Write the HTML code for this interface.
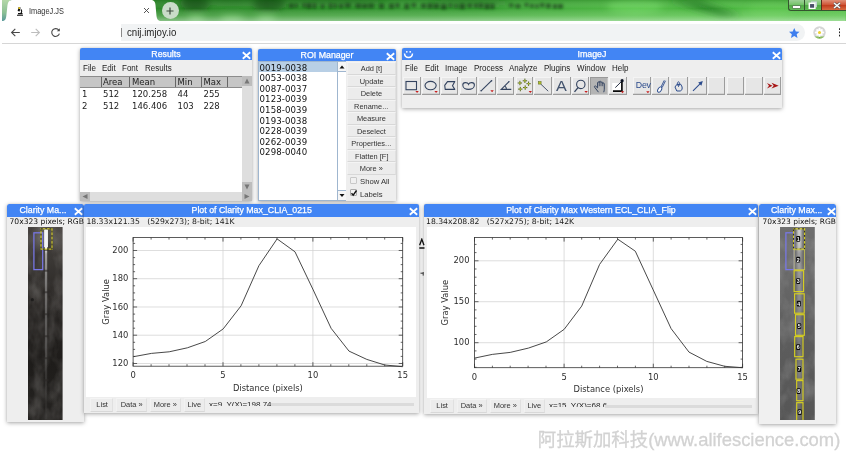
<!DOCTYPE html>
<html><head><meta charset="utf-8"><title>ImageJ.JS</title>
<style>
html,body{margin:0;padding:0}
body{width:846px;height:454px;overflow:hidden;position:relative;background:#fff;font-family:"Liberation Sans",sans-serif;color:#222}
.a{position:absolute}
.t{position:absolute;white-space:nowrap;line-height:1;transform-origin:0 50%}
.win{position:absolute;background:#eee;box-shadow:0 1px 4px rgba(0,0,0,.35),0 0 1px rgba(0,0,0,.2);border-radius:2px 2px 0 0}
.tb{position:absolute;left:0;top:0;right:0;height:12px;background:#4285f4;border-radius:2px 2px 0 0;color:#fff;font-size:8.8px;text-align:center;line-height:12.5px;-webkit-text-stroke:.25px #fff;white-space:nowrap;overflow:hidden}
.x{position:absolute;top:3px;width:9px;height:9px}
.dj{font-family:"DejaVu Sans",sans-serif}
.mono{font-family:"Liberation Mono",monospace}
.btn{position:absolute;background:#ececec;border:1px solid;border-color:#f4f4f4 #e0e0e0 #d8d8d8 #f2f2f2;box-sizing:border-box;font-size:7.9px;text-align:center;color:#333;white-space:nowrap}
.btn span{display:inline-block;transform:scaleX(.94)}
.tool{position:absolute;top:28.6px;background:#e6e6e6;box-shadow:inset -1px -1.3px 0 #9c9c9c,inset 1px 1px 0 #f4f4f4;overflow:hidden}
.tool.sel{background:#b4b4b4;box-shadow:inset 1px 1px 0 #9a9a9a,inset -1px -1px 0 #c8c8c8}
</style></head>
<body>
<div id="root" style="position:absolute;left:0;top:0;width:846px;height:454px;will-change:transform">
<!-- ===== browser chrome ===== -->
<div id="chrome" class="a" style="left:0;top:0;width:846px;height:44px;background:#fff">
 <div class="a" id="green" style="left:2px;top:0;width:844px;height:21.200px;overflow:hidden;background:linear-gradient(90deg,#2c8228 0%,#2e8a2b 18%,#33932f 35%,#3a9c36 50%,#44aa3d 62%,#4fb844 75%,#52bc46 88%,#58c04a 100%)">
  <svg class="a" style="left:0;top:0" width="844" height="21.200" viewBox="2 0 844 21.200">
   <defs><filter id="gb" x="-20%" y="-150%" width="140%" height="400%"><feGaussianBlur stdDeviation="3.500"/></filter>
   <filter id="gb2" x="-5%" y="-100%" width="110%" height="300%"><feGaussianBlur stdDeviation="1.500"/></filter>
   <linearGradient id="gv" x1="0" y1="0" x2="0" y2="1"><stop offset="0" stop-color="#0a4a0a" stop-opacity=".22"/><stop offset=".4" stop-color="#fff" stop-opacity="0"/><stop offset=".72" stop-color="#d8ffd0" stop-opacity=".2"/><stop offset="1" stop-color="#f0fff0" stop-opacity=".48"/></linearGradient></defs>
   <g filter="url(#gb)">
    <ellipse cx="195" cy="3" rx="15" ry="7" fill="#114a11" opacity=".85"/>
    <ellipse cx="269" cy="3" rx="17" ry="7" fill="#114a11" opacity=".85"/>
    <ellipse cx="232" cy="1" rx="30" ry="3" fill="#1a601a" opacity=".6"/>
    <ellipse cx="330" cy="2" rx="60" ry="4" fill="#1c641c" opacity=".45"/>
    <ellipse cx="196" cy="19" rx="9" ry="3" fill="#90d888" opacity=".7"/>
    <ellipse cx="232" cy="19" rx="12" ry="3" fill="#90d888" opacity=".7"/>
    <ellipse cx="266" cy="19" rx="10" ry="3" fill="#90d888" opacity=".7"/>
    <ellipse cx="470" cy="3" rx="40" ry="5" fill="#1f6a1f" opacity=".4"/>
    <ellipse cx="635" cy="6" rx="28" ry="8" fill="#70d862" opacity=".6"/>
    <path d="M668 0L700 0L742 16L722 18Z" fill="#1f7a20" opacity=".8"/>
    <ellipse cx="770" cy="10" rx="22" ry="9" fill="#62cc54" opacity=".5"/>
   </g>
   <g filter="url(#gb2)" fill="#0c360c" opacity=".72"><rect x="289" y="3.5" width="4.5" height="4.5"/><rect x="294.5" y="3.5" width="3" height="4"/><rect x="302.5" y="3" width="3" height="4.5"/><rect x="306.5" y="3" width="5" height="5.5"/><rect x="313.0" y="3" width="3" height="5.5"/><rect x="321.0" y="4" width="3" height="4.5"/><rect x="329.0" y="3" width="3" height="5.5"/><rect x="333.5" y="3.5" width="3" height="4.5"/><rect x="339.0" y="4" width="4" height="4"/><rect x="345.0" y="3" width="5.5" height="4.5"/><rect x="355.5" y="3.5" width="5.5" height="4.5"/><rect x="362.0" y="4" width="5.5" height="4"/><rect x="368.5" y="3.5" width="5.5" height="4.5"/><rect x="379.0" y="3.5" width="5" height="5"/><rect x="389.0" y="3.5" width="5" height="5"/><rect x="395.5" y="3" width="4" height="4.5"/><rect x="404.5" y="3.5" width="4.5" height="5.5"/><rect x="411.5" y="3" width="4.5" height="4"/><rect x="421.0" y="3.5" width="5" height="4.5"/><rect x="427.5" y="3" width="5" height="5.5"/><rect x="433.5" y="3.5" width="5.5" height="5"/><rect x="441.0" y="4" width="5.5" height="5.5"/><rect x="449.0" y="3.5" width="3" height="4"/><rect x="454.5" y="4" width="3" height="4"/><rect x="459.5" y="3.5" width="5.5" height="5.5"/><rect x="467.5" y="3.5" width="4.5" height="4"/><rect x="474.0" y="3.5" width="4" height="4"/><rect x="479.0" y="3" width="4" height="5"/><rect x="484.5" y="3.5" width="5" height="5.5"/><rect x="490.5" y="3.5" width="4" height="5.5"/><rect x="509" y="3.5" width="4.5" height="3.5"/><rect x="515.5" y="4" width="5" height="4"/><rect x="524.5" y="3" width="4" height="3.5"/><rect x="530.0" y="4" width="4" height="3.5"/><rect x="535.5" y="4" width="3" height="4"/><rect x="540.0" y="3" width="4.5" height="4"/><rect x="546.0" y="3.5" width="5" height="4.5"/><rect x="553.0" y="4" width="4" height="4.5"/><rect x="558.0" y="4" width="5" height="4.5"/></g>
   <rect x="2" y="0" width="844" height="21.200" fill="url(#gv)"/>
  </svg>
 </div>
 <!-- left sliver -->
 <div class="a" style="left:2px;top:0;width:8px;height:21px;background:linear-gradient(180deg,#b4d8a8,#8cc094 60%,#5a9a9a)"></div>
 <svg class="a" style="left:2px;top:0" width="162" height="21" viewBox="0 0 162 21"><path d="M0 21C3 21 4 19 4.300 16L5.500 5C6 1.500 7.500 0 10 0H148.500C152 0 153.100 1.500 153.500 5L154.500 16C154.900 19 156 21 159.500 21Z" fill="#fff"/></svg>
 <!-- favicon -->
 <svg class="a" style="left:16px;top:6px" width="8" height="10" viewBox="0 0 8 10"><path d="M1 9.200h6M2 7.600h4.500M4.500 7.500c1.500-.8 1.500-3 .3-4" stroke="#111" stroke-width="1.100" fill="none"/><path d="M2.600 1l2 .6l-1 4l-2-.6z" fill="#111"/><rect x="2.400" y="1.200" width="1.600" height="1.800" fill="#e8c820"/></svg>
 <div class="t" style="left:29.300px;top:7.900px;font-size:8.200px;color:#333;transform:scaleX(.9)">ImageJ.JS</div>
 <svg class="a" style="left:143.200px;top:7.200px" width="7" height="7" viewBox="0 0 7 7"><path d="M1 1L6 6M6 1L1 6" stroke="#444" stroke-width=".9" fill="none"/></svg>
 <!-- new tab -->
 <div class="a" style="left:161.800px;top:2.200px;width:17px;height:17px;border-radius:50%;background:#c9dcc8"></div>
 <svg class="a" style="left:166.300px;top:6.700px" width="8" height="8" viewBox="0 0 8 8"><path d="M4 .5V7.500M.5 4H7.500" stroke="#3c4a3c" stroke-width="1.200"/></svg>
 <!-- window controls -->
 <div class="a" style="left:787.500px;top:-1px;width:58.500px;height:11.500px;border:1px solid #35552f;border-right:0;border-radius:0 0 0 3px;box-sizing:border-box;background:linear-gradient(180deg,rgba(230,245,225,.55),rgba(150,200,140,.35) 50%,rgba(60,130,55,.35) 52%,rgba(110,180,100,.4))"></div>
 <div class="a" style="left:804px;top:0;width:1px;height:10px;background:#35552f"></div>
 <div class="a" style="left:821px;top:0;width:25px;height:10px;background:linear-gradient(180deg,#e09078,#d0583a 45%,#c03a1c 50%,#d86a40);border-left:1px solid #5a2a1a;box-sizing:border-box"></div>
 <div class="a" style="left:792.500px;top:5.500px;width:7px;height:2px;background:#fff;box-shadow:0 0 0 .5px #666"></div>
 <svg class="a" style="left:808px;top:.5px" width="9" height="8.500" viewBox="0 0 9 8.500"><path d="M3 1.200h5.200v5" fill="none" stroke="#cfd6e6" stroke-width="1.300"/><rect x="1.300" y="2.300" width="5.600" height="5.200" fill="#4a5068" stroke="#fff" stroke-width="1.500"/></svg>
 <svg class="a" style="left:832.500px;top:1.500px" width="8" height="7" viewBox="0 0 8 7"><path d="M1 1L7 6M7 1L1 6" stroke="#555" stroke-width="2.600"/><path d="M1 1L7 6M7 1L1 6" stroke="#fff" stroke-width="1.500"/></svg>
 <!-- toolbar -->
 <svg class="a" style="left:10px;top:27px" width="54" height="11" viewBox="0 0 54 11"><path d="M9.800 5.500H1.800M5.300 1.800L1.600 5.500L5.300 9.200" stroke="#484848" stroke-width="1.100" fill="none"/><path d="M21.200 5.500H29.200M25.700 1.800L29.400 5.500L25.700 9.200" stroke="#bdbdbd" stroke-width="1.100" fill="none"/><path d="M48.800 3.200A3.900 3.900 0 1 0 49.400 6.600" stroke="#484848" stroke-width="1.100" fill="none"/><path d="M49.800 1.300V4.300H46.800Z" fill="#484848"/></svg>
 <div class="a" style="left:121px;top:23.800px;width:684px;height:16.800px;background:#f1f3f4;border-radius:0 8.400px 8.400px 0"></div>
 <div class="a" style="left:121.300px;top:27.500px;width:.8px;height:9.500px;background:#8a8a8a"></div>
 <div class="t" style="left:127.400px;top:27.900px;font-size:10.300px;color:#222;transform:scaleX(.94)">cnij.imjoy.io</div>
 <svg class="a" style="left:789px;top:27.500px" width="10.500" height="10" viewBox="0 0 10.500 10"><path d="M5.250 0L6.800 3.400L10.500 3.800L7.700 6.200L8.500 9.900L5.250 8L2 9.900L2.800 6.200L0 3.800L3.700 3.400Z" fill="#3f7fee"/></svg>
 <svg class="a" style="left:813px;top:26px" width="13" height="13" viewBox="0 0 13 13"><defs><clipPath id="av"><circle cx="6.500" cy="6.500" r="6.200"/></clipPath></defs><g clip-path="url(#av)"><rect width="13" height="13" fill="#d6d6d6"/><rect y="10.500" width="13" height="3" fill="#8cc060"/><path d="M6.500 7V12" stroke="#6a9a40" stroke-width=".8"/><g fill="#fff"><ellipse cx="6.500" cy="3.800" rx="1.200" ry="2"/><ellipse cx="6.500" cy="9" rx="1.200" ry="2"/><ellipse cx="3.900" cy="6.400" rx="2" ry="1.200"/><ellipse cx="9.100" cy="6.400" rx="2" ry="1.200"/><ellipse cx="4.700" cy="4.600" rx="1.100" ry="1.800" transform="rotate(-45 4.700 4.600)"/><ellipse cx="8.300" cy="4.600" rx="1.100" ry="1.800" transform="rotate(45 8.300 4.600)"/><ellipse cx="4.700" cy="8.200" rx="1.100" ry="1.800" transform="rotate(45 4.700 8.200)"/><ellipse cx="8.300" cy="8.200" rx="1.100" ry="1.800" transform="rotate(-45 8.300 8.200)"/></g><circle cx="6.500" cy="6.400" r="1.500" fill="#f0d030"/></g></svg>
 <div class="a" style="left:838.700px;top:28.300px;width:1.800px;height:1.800px;border-radius:50%;background:#222;box-shadow:0 3.300px 0 #222,0 6.600px 0 #222"></div>
 <div class="a" style="left:2px;top:43.200px;width:844px;height:.9px;background:#d6d6d6"></div>
</div>

<!-- ===== Results ===== -->
<div class="win" id="results" style="left:80px;top:48px;width:172px;height:153px">
 <div class="tb" style="top:-.3px;height:12.400px">Results</div>
 <svg class="x" style="left:161.5px" viewBox="0 0 9 9"><path d="M.8 1.300L8.200 7.700M8.200 1.300L.8 7.700" stroke="#fff" stroke-width="1.800" fill="none"/></svg>
 <div class="t" style="left:3px;top:16.2px;font-size:8.4px;transform:scaleX(.955)">File</div>
 <div class="t" style="left:22px;top:16.2px;font-size:8.4px;transform:scaleX(.955)">Edit</div>
 <div class="t" style="left:42px;top:16.2px;font-size:8.4px;transform:scaleX(.955)">Font</div>
 <div class="t" style="left:65px;top:16.2px;font-size:8.4px;transform:scaleX(.955)">Results</div>
 <div class="a" style="left:0;top:40px;width:162px;height:104px;background:#fff"></div>
 <div class="a" style="left:0;top:28px;width:162px;height:12px;background:#c6c6c6;border-top:1px solid #8c8c8c;border-bottom:1px solid #8c8c8c;box-sizing:border-box"></div>
 <div class="a" style="left:21px;top:29px;width:1px;height:10px;background:#666"></div>
 <div class="a" style="left:49px;top:29px;width:1px;height:10px;background:#666"></div>
 <div class="a" style="left:95px;top:29px;width:1px;height:10px;background:#666"></div>
 <div class="a" style="left:121px;top:29px;width:1px;height:10px;background:#666"></div>
 <div class="a" style="left:147px;top:29px;width:1px;height:10px;background:#666"></div>
 <div class="t dj" style="left:23px;top:30px;font-size:8.5px">Area</div>
 <div class="t dj" style="left:52px;top:30px;font-size:8.5px">Mean</div>
 <div class="t dj" style="left:97.5px;top:30px;font-size:8.5px">Min</div>
 <div class="t dj" style="left:123.5px;top:30px;font-size:8.5px">Max</div>
 <div class="t dj" style="left:2px;top:42px;font-size:8.5px">1</div>
 <div class="t dj" style="left:23px;top:42px;font-size:8.5px">512</div>
 <div class="t dj" style="left:52px;top:42px;font-size:8.5px">120.258</div>
 <div class="t dj" style="left:97.5px;top:42px;font-size:8.5px">44</div>
 <div class="t dj" style="left:123.5px;top:42px;font-size:8.5px">255</div>
 <div class="t dj" style="left:2px;top:53.5px;font-size:8.5px">2</div>
 <div class="t dj" style="left:23px;top:53.5px;font-size:8.5px">512</div>
 <div class="t dj" style="left:52px;top:53.5px;font-size:8.5px">146.406</div>
 <div class="t dj" style="left:97.5px;top:53.5px;font-size:8.5px">103</div>
 <div class="t dj" style="left:123.5px;top:53.5px;font-size:8.5px">228</div>
 <!-- v scrollbar -->
 <div class="a" style="left:162px;top:28px;width:10px;height:116px;background:#dedede"></div>
 <div class="a" style="left:162px;top:28px;width:10px;height:10px;background:#bdbdbd"></div>
 <div class="a" style="left:162px;top:134px;width:10px;height:10px;background:#bdbdbd"></div>
 <svg class="a" style="left:162px;top:28px" width="10" height="10"><path d="M2.5 7.5L5 2.5L7.5 7.5Z" fill="#777"/></svg>
 <svg class="a" style="left:162px;top:134px" width="10" height="10"><path d="M2.5 2.5L5 7.5L7.5 2.5Z" fill="#777"/></svg>
 <!-- h scrollbar -->
 <div class="a" style="left:0;top:144px;width:172px;height:9px;background:#dedede"></div>
 <div class="a" style="left:0;top:144px;width:10px;height:9px;background:#bdbdbd"></div>
 <div class="a" style="left:162px;top:144px;width:10px;height:9px;background:#bdbdbd"></div>
 <svg class="a" style="left:0px;top:144px" width="10" height="9"><path d="M7.5 2L2.5 4.5L7.5 7Z" fill="#777"/></svg>
 <svg class="a" style="left:162px;top:144px" width="10" height="9"><path d="M2.5 2L7.5 4.5L2.5 7Z" fill="#777"/></svg>
</div><!--/results-->

<!-- ===== ROI Manager ===== -->
<div class="win" id="roi" style="left:258px;top:48.600px;width:138px;height:152.900px">
 <div class="tb" style="height:12.300px">ROI Manager</div>
 <svg class="x" style="left:128px" viewBox="0 0 9 9"><path d="M.8 1.300L8.200 7.700M8.200 1.300L.8 7.700" stroke="#fff" stroke-width="1.800" fill="none"/></svg>
 <div class="a" style="left:0;top:12.200px;width:88px;height:139.800px;background:#fff;border:1px solid #9fb6cf;box-sizing:border-box"></div>
 <div class="a" style="left:1px;top:13.100px;width:78px;height:10.500px;background:#b8cfe5"></div>
 <div class="t dj" style="left:1.5px;top:15.20px;font-size:8.6px;letter-spacing:.1px;color:#111">0019-0038</div>
 <div class="t dj" style="left:1.5px;top:25.75px;font-size:8.6px;letter-spacing:.1px;color:#111">0053-0038</div>
 <div class="t dj" style="left:1.5px;top:36.30px;font-size:8.6px;letter-spacing:.1px;color:#111">0087-0037</div>
 <div class="t dj" style="left:1.5px;top:46.85px;font-size:8.6px;letter-spacing:.1px;color:#111">0123-0039</div>
 <div class="t dj" style="left:1.5px;top:57.40px;font-size:8.6px;letter-spacing:.1px;color:#111">0158-0039</div>
 <div class="t dj" style="left:1.5px;top:67.95px;font-size:8.6px;letter-spacing:.1px;color:#111">0193-0038</div>
 <div class="t dj" style="left:1.5px;top:78.50px;font-size:8.6px;letter-spacing:.1px;color:#111">0228-0039</div>
 <div class="t dj" style="left:1.5px;top:89.05px;font-size:8.6px;letter-spacing:.1px;color:#111">0262-0039</div>
 <div class="t dj" style="left:1.5px;top:99.60px;font-size:8.6px;letter-spacing:.1px;color:#111">0298-0040</div>
 <div class="a" style="left:79px;top:13.200px;width:8px;height:137.800px;background:#fff;border-left:1px solid #9fb6cf"></div>
 <svg class="a" style="left:80px;top:13.200px" width="8" height="10"><rect width="8" height="9.500" fill="#f6f6f6"/><path d="M0 9.500H8" stroke="#9fb6cf" stroke-width="1"/><path d="M1.500 6.500L4 3.500L6.500 6.500Z" fill="#111"/></svg>
 <svg class="a" style="left:80px;top:141.200px" width="8" height="10"><rect y=".5" width="8" height="9.500" fill="#f6f6f6"/><path d="M0 .5H8" stroke="#9fb6cf" stroke-width="1"/><path d="M1.500 4L4 7L6.500 4Z" fill="#111"/></svg>
 <div class="btn" style="left:89px;top:13.7px;width:49px;height:12.5px;line-height:11.3px"><span>Add [t]</span></div>
 <div class="btn" style="left:89px;top:26.2px;width:49px;height:12.5px;line-height:11.3px"><span>Update</span></div>
 <div class="btn" style="left:89px;top:38.7px;width:49px;height:12.5px;line-height:11.3px"><span>Delete</span></div>
 <div class="btn" style="left:89px;top:51.2px;width:49px;height:12.5px;line-height:11.3px"><span>Rename...</span></div>
 <div class="btn" style="left:89px;top:63.7px;width:49px;height:12.5px;line-height:11.3px"><span>Measure</span></div>
 <div class="btn" style="left:89px;top:76.2px;width:49px;height:12.5px;line-height:11.3px"><span>Deselect</span></div>
 <div class="btn" style="left:89px;top:88.7px;width:49px;height:12.5px;line-height:11.3px"><span>Properties...</span></div>
 <div class="btn" style="left:89px;top:101.2px;width:49px;height:12.5px;line-height:11.3px"><span>Flatten [F]</span></div>
 <div class="btn" style="left:89px;top:113.7px;width:49px;height:12.5px;line-height:11.3px"><span>More »</span></div>
 <div class="a" style="left:91.500px;top:128.4px;width:7px;height:7px;border:1px solid #c8c8c8;background:#f0f0f0;border-radius:1px;box-sizing:border-box"></div>
 <div class="t" style="left:102.300px;top:129.2px;font-size:8.100px;color:#333;transform:scaleX(.95)">Show All</div>
 <div class="a" style="left:91.500px;top:140.9px;width:7px;height:7px;border:1px solid #aaa;background:#f4f4f4;border-radius:1px;box-sizing:border-box"></div>
 <svg class="a" style="left:91.500px;top:140.2px" width="8" height="8"><path d="M1.500 4.200L3.200 6.200L6.500 1.500" stroke="#111" stroke-width="1.400" fill="none"/></svg>
 <div class="t" style="left:102.300px;top:142.3px;font-size:8.100px;color:#333;transform:scaleX(.95)">Labels</div>
</div><!--/roi-->

<!-- ===== ImageJ ===== -->
<div class="win" id="ij" style="left:402px;top:48px;width:380px;height:59.5px">
 <div class="tb" style="top:-.3px;height:12.400px">ImageJ</div>
 <svg class="x" style="left:369.5px" viewBox="0 0 9 9"><path d="M.8 1.300L8.200 7.700M8.200 1.300L.8 7.700" stroke="#fff" stroke-width="1.800" fill="none"/></svg>
 <svg class="a" style="left:.800px;top:.600px" width="11" height="10" viewBox="0 0 11 10"><path d="M1.500 4.500c.3 3 2 4 4 4s3.700-1 4-4" fill="none" stroke="#fff" stroke-width="1.500"/><circle cx="3.800" cy="2.800" r=".9" fill="#fff"/><circle cx="7.200" cy="2.800" r=".9" fill="#fff"/></svg>
 <div class="t" style="left:3.2px;top:16.300px;font-size:8.4px;transform:scaleX(.955)">File</div>
 <div class="t" style="left:22.7px;top:16.300px;font-size:8.4px;transform:scaleX(.955)">Edit</div>
 <div class="t" style="left:42.8px;top:16.300px;font-size:8.4px;transform:scaleX(.955)">Image</div>
 <div class="t" style="left:71.6px;top:16.300px;font-size:8.4px;transform:scaleX(.955)">Process</div>
 <div class="t" style="left:107.0px;top:16.300px;font-size:8.4px;transform:scaleX(.955)">Analyze</div>
 <div class="t" style="left:142.0px;top:16.300px;font-size:8.4px;transform:scaleX(.955)">Plugins</div>
 <div class="t" style="left:175.0px;top:16.300px;font-size:8.4px;transform:scaleX(.955)">Window</div>
 <div class="t" style="left:209.8px;top:16.300px;font-size:8.4px;transform:scaleX(.955)">Help</div>
 <svg class="tool" style="left:1.4px" width="17.6" height="18" viewBox="0 0 17.6 18"><rect x="3" y="4.500" width="10.500" height="8.200" fill="none" stroke="#33435f" stroke-width="1.100"/><path d="M12.4 14h3.400l-1.700 2z" fill="#c81e1e"/></svg>
 <svg class="tool" style="left:20.1px" width="17.6" height="18" viewBox="0 0 17.6 18"><ellipse cx="8.600" cy="8.600" rx="5.600" ry="4.200" fill="none" stroke="#33435f" stroke-width="1.100"/><path d="M12.4 14h3.400l-1.700 2z" fill="#c81e1e"/></svg>
 <svg class="tool" style="left:38.8px" width="17.6" height="18" viewBox="0 0 17.6 18"><path d="M6.500 4.600H13.800L11.500 8.800L13.800 12.400H4.200L3.700 8.300Z" fill="none" stroke="#33435f" stroke-width="1.100" stroke-linejoin="round"/></svg>
 <svg class="tool" style="left:57.5px" width="17.6" height="18" viewBox="0 0 17.6 18"><path d="M8.550 7.300C7.600 5.200 2.800 4.800 2.800 8C2.800 10.800 5.600 12.400 8.550 12.400C11.500 12.400 14.400 10.800 14.400 8C14.400 4.800 9.500 5.200 8.550 7.300Z" fill="none" stroke="#33435f" stroke-width="1.100"/></svg>
 <svg class="tool" style="left:76.2px" width="17.6" height="18" viewBox="0 0 17.6 18"><path d="M3.100 13.800L13.600 3.700" stroke="#33435f" stroke-width="1.100"/><circle cx="3.100" cy="13.800" r=".8" fill="#33435f"/><circle cx="13.600" cy="3.700" r=".8" fill="#33435f"/><path d="M12.400 13.200h3.400l-1.700 2z" fill="#c81e1e"/></svg>
 <svg class="tool" style="left:94.9px" width="17.6" height="18" viewBox="0 0 17.6 18"><path d="M12 4.600L4.200 12.400H14.300M9.500 12.400C9.500 10.800 8.900 9.800 7.900 9.100" fill="none" stroke="#33435f" stroke-width="1.100"/><circle cx="12" cy="4.600" r=".7" fill="#33435f"/></svg>
 <svg class="tool" style="left:113.6px" width="17.6" height="18" viewBox="0 0 17.6 18"><path d="M3.9 3.8v4.400M1.6999999999999997 6h4.400" stroke="#55651c" stroke-width="1"/><rect x="3.2" y="5.3" width="1.400" height="1.400" fill="#b4c424"/><path d="M8.9 1.5999999999999996v4.400M6.7 3.8h4.400" stroke="#55651c" stroke-width="1"/><rect x="8.200000000000001" y="3.0999999999999996" width="1.400" height="1.400" fill="#b4c424"/><path d="M12.6 4.5v4.400M10.399999999999999 6.7h4.400" stroke="#55651c" stroke-width="1"/><rect x="11.9" y="6.0" width="1.400" height="1.400" fill="#b4c424"/><path d="M4.3 9.899999999999999v4.400M2.0999999999999996 12.1h4.400" stroke="#55651c" stroke-width="1"/><rect x="3.5999999999999996" y="11.4" width="1.400" height="1.400" fill="#b4c424"/><path d="M9.2 8.399999999999999v4.400M6.999999999999999 10.6h4.400" stroke="#55651c" stroke-width="1"/><rect x="8.5" y="9.9" width="1.400" height="1.400" fill="#b4c424"/><path d="M12.600 14h3.400l-1.700 2z" fill="#c81e1e"/></svg>
 <svg class="tool" style="left:132.3px" width="17.6" height="18" viewBox="0 0 17.6 18"><path d="M6.500 6.800L14.200 14.200" stroke="#4a566c" stroke-width="1"/><rect x="4.300" y="4.600" width="2.800" height="2.500" fill="#b4c424" stroke="#6a7530" stroke-width=".6"/></svg>
 <svg class="tool" style="left:151.0px" width="17.6" height="18" viewBox="0 0 17.6 18"><text x="0" y="0" transform="translate(8.500 14.200) scale(1.12 1)" font-family="Liberation Sans,sans-serif" font-size="14.500" text-anchor="middle" fill="#44546e">A</text></svg>
 <svg class="tool" style="left:169.7px" width="17.6" height="18" viewBox="0 0 17.6 18"><circle cx="8.800" cy="7.400" r="4.200" fill="none" stroke="#33435f" stroke-width="1.100"/><path d="M6 10.600L2.500 14.900" stroke="#33435f" stroke-width="1.300"/><path d="M12.4 14h3.400l-1.700 2z" fill="#c81e1e"/></svg>
 <svg class="tool sel" style="left:188.4px" width="17.6" height="18" viewBox="0 0 17.6 18"><path d="M8.500 15.200L4.600 10.200c-.6-.9.400-1.700 1.200-1l1.800 1.700v-5.200c0-1.100 1.700-1.100 1.700 0v-.7c0-1.100 1.700-1.100 1.700 0v.7c0-1 1.700-1 1.700 0v1c0-.9 1.600-.9 1.600 0v5.500c0 1.300-.3 2.300-.6 3" fill="none" stroke="#33435f" stroke-width="1"/><path d="M9.300 5.500v3.700M11 5.500v3.700M12.700 6.500v2.700" stroke="#33435f" stroke-width=".8"/></svg>
 <svg class="tool" style="left:207.1px" width="17.6" height="18" viewBox="0 0 17.6 18"><rect x="3.200" y="6" width="9.500" height="7.500" fill="#fff"/><path d="M4 14.200h9.800M12.900 4.600v10.400" fill="none" stroke="#0a0a0a" stroke-width="1.700"/><path d="M6.300 10.600L12 5" stroke="#222c40" stroke-width="1"/><circle cx="13.100" cy="3.700" r="1.600" fill="#0a1020"/><path d="M11.800 14.300h3.400l-1.700 2z" fill="#c81e1e"/></svg>
 <svg class="tool" style="left:231.0px" width="17.6" height="18" viewBox="0 0 17.6 18"><text x="2.800" y="10.900" font-family="Liberation Sans,sans-serif" font-size="8.800" letter-spacing="-.2" fill="#2a4a8c">Dev</text><path d="M13.200 14.300h3.400l-1.700 2z" fill="#c81e1e"/></svg>
 <svg class="tool" style="left:249.7px" width="17.6" height="18" viewBox="0 0 17.6 18"><path d="M12.300 3.300L9 10M13.500 3.800L10.200 10.500" stroke="#2a4a8c" stroke-width=".9"/><ellipse cx="7.700" cy="12.600" rx="1.700" ry="2.900" transform="rotate(32 7.700 12.600)" fill="#fff" stroke="#2a4a8c" stroke-width=".9"/></svg>
 <svg class="tool" style="left:268.4px" width="17.6" height="18" viewBox="0 0 17.6 18"><path d="M5 10l2-2.700h3.800l1.300 2.700v2.500l-1.800 1.500h-3.500z" fill="none" stroke="#2a4a8c" stroke-width="1"/><path d="M7.500 8.500c-.5-1.800 0-3 1-3.900c1 .9 1.500 2.100 1 3.900" fill="none" stroke="#2a4a8c" stroke-width=".9"/><path d="M8.500 7v3" stroke="#2a4a8c" stroke-width=".8"/></svg>
 <svg class="tool" style="left:287.1px" width="17.6" height="18" viewBox="0 0 17.6 18"><path d="M4 13.800L11.500 6.300" stroke="#2a4a8c" stroke-width="1.100"/><path d="M13.800 4l-4.600 1.500l3.200 3.200z" fill="#2a4a8c"/></svg>
 <svg class="tool" style="left:305.8px" width="17.6" height="18" viewBox="0 0 17.6 18"></svg>
 <svg class="tool" style="left:324.5px" width="17.6" height="18" viewBox="0 0 17.6 18"></svg>
 <svg class="tool" style="left:343.2px" width="17.6" height="18" viewBox="0 0 17.6 18"></svg>
 <svg class="tool" style="left:361.9px" width="17.6" height="18" viewBox="0 0 17.6 18"><path d="M3 6l5.500 2.700l-5.500 2.700l2-2.700z" fill="#a81616"/><path d="M7.500 5.800l7.200 2.900l-7.200 2.900l2.200-2.900z" fill="#a81616"/></svg>
</div><!--/ij-->

<!-- ===== left image ===== -->
<div class="win" id="imgL" style="left:7px;top:204px;width:77.400px;height:218.3px;overflow:hidden">
 <div class="tb" style="height:12.800px;text-align:left;padding-left:12.5px;right:0">Clarity Ma...</div>
 <svg class="x" style="left:67.0px" viewBox="0 0 9 9"><path d="M.8 1.300L8.200 7.700M8.200 1.300L.8 7.700" stroke="#fff" stroke-width="1.800" fill="none"/></svg>
 <div class="t dj" style="left:2.5px;top:13.600px;font-size:7.6px;color:#111">70x323 pixels; RGB; 88K</div>
 <svg class="a" style="left:21.4px;top:22.8px" width="34.6" height="193.6" viewBox="28.4 226.8 34.6 193.6">
  <defs>
   <linearGradient id="lbg" x1="0" y1="0" x2="0" y2="1"><stop offset="0" stop-color="#45413e"/><stop offset=".18" stop-color="#3a3734"/><stop offset=".4" stop-color="#282523"/><stop offset=".7" stop-color="#1e1c1a"/><stop offset="1" stop-color="#252321"/></linearGradient>
   <linearGradient id="lst" x1="0" y1="0" x2="0" y2="1"><stop offset="0" stop-color="#fff" stop-opacity="1"/><stop offset=".1" stop-color="#fff" stop-opacity=".95"/><stop offset=".13" stop-color="#ddd" stop-opacity=".62"/><stop offset=".3" stop-color="#ccc" stop-opacity=".42"/><stop offset=".55" stop-color="#bbb" stop-opacity=".3"/><stop offset=".8" stop-color="#aaa" stop-opacity=".14"/><stop offset="1" stop-color="#aaa" stop-opacity=".05"/></linearGradient>
   <radialGradient id="lb1"><stop offset="0" stop-color="#8a8885" stop-opacity=".55"/><stop offset="1" stop-color="#8a8885" stop-opacity="0"/></radialGradient>
   <filter id="nz1" x="0" y="0" width="100%" height="100%"><feTurbulence type="fractalNoise" baseFrequency=".09 .05" numOctaves="3" seed="4"/><feColorMatrix values="0 0 0 0 .62  0 0 0 0 .6  0 0 0 0 .58  .9 .9 0 0 -.72"/></filter>
   <filter id="bl1" x="-50%" y="-5%" width="200%" height="110%"><feGaussianBlur stdDeviation=".7"/></filter>
  </defs>
  <rect x="28.4" y="226.8" width="34.6" height="193.6" fill="url(#lbg)"/>
  <rect x="28.4" y="226.8" width="34.6" height="193.6" filter="url(#nz1)" opacity=".3"/>
  <ellipse cx="40" cy="238" rx="10" ry="16" fill="url(#lb1)"/>
  <ellipse cx="56" cy="240" rx="8" ry="14" fill="url(#lb1)" opacity=".7"/>
  <ellipse cx="36" cy="290" rx="8" ry="14" fill="url(#lb1)" opacity=".35"/>
  <ellipse cx="57" cy="300" rx="8" ry="18" fill="url(#lb1)" opacity=".3"/>
  <ellipse cx="52" cy="397" rx="7" ry="7" fill="url(#lb1)" opacity=".4"/>
  <ellipse cx="32" cy="410" rx="7" ry="8" fill="url(#lb1)" opacity=".4"/>
  <ellipse cx="32.800" cy="299.500" rx="1.600" ry="1.600" fill="#111" opacity=".6"/>
  <g filter="url(#bl1)">
   <rect x="45.300" y="229" width="2.300" height="190" fill="url(#lst)"/>
   <rect x="44.500" y="229.500" width="3.900" height="17.500" fill="#f4f4f4" opacity=".95"/>
  </g>
  <path d="M44 249.800h5M44 270.500h5M44 292h5M44 314h5M44 336h5M44 358h5M44 380h5" stroke="#2b2826" stroke-width="2" opacity=".6"/>
  <rect x="34.300" y="232.600" width="8.800" height="36.800" fill="none" stroke="#7878e8" stroke-width="1.250"/>
  <rect x="41.400" y="228.600" width="11" height="20.300" fill="none" stroke="#e0d820" stroke-width="1"/>
  <rect x="41.400" y="228.600" width="11" height="20.300" fill="none" stroke="#222" stroke-width="1" stroke-dasharray="1.800 2.500"/>
 </svg>
</div><!--/imgL-->

<!-- ===== plot 1 ===== -->
<div class="win" id="plot1" style="left:84.4px;top:204px;width:334.6px;height:208.5px">
 <div class="tb" style="height:12.800px">Plot of Clarity Max_CLIA_0215</div>
 <svg class="x" style="left:324.6px" viewBox="0 0 9 9"><path d="M.8 1.300L8.200 7.700M8.200 1.300L.8 7.700" stroke="#fff" stroke-width="1.800" fill="none"/></svg>
 <div class="t dj" style="left:2px;top:13.600px;font-size:7.7px;color:#1a1a1a">18.33x121.35&nbsp;&nbsp; (529x273); 8-bit; 141K</div>
 <svg class="a" style="left:2.1px;top:22.7px" width="330.0" height="170.3" viewBox="86.5 226.7 330.0 170.3" font-family="DejaVu Sans,sans-serif" font-size="8.400" fill="#2e2e2e">
  <rect x="86.5" y="226.7" width="330.0" height="170.3" fill="#fff"/>
  <path d="M223.5 237.3V365.9M313.4 237.3V365.9M133.6 250.2H403.2M133.6 278.4H403.2M133.6 306.7H403.2M133.6 334.9H403.2M133.6 363.2H403.2" stroke="#cecece" stroke-width=".7" fill="none"/>
  <path d="M133.6 365.9v-4M133.6 237.3v4M223.5 365.9v-4M223.5 237.3v4M313.4 365.9v-4M313.4 237.3v4M403.2 365.9v-4M403.2 237.3v4M151.6 365.9v-2M151.6 237.3v2M169.5 365.9v-2M169.5 237.3v2M187.5 365.9v-2M187.5 237.3v2M205.5 365.9v-2M205.5 237.3v2M241.4 365.9v-2M241.4 237.3v2M259.4 365.9v-2M259.4 237.3v2M277.4 365.9v-2M277.4 237.3v2M295.4 365.9v-2M295.4 237.3v2M331.3 365.9v-2M331.3 237.3v2M349.3 365.9v-2M349.3 237.3v2M367.3 365.9v-2M367.3 237.3v2M385.2 365.9v-2M385.2 237.3v2M133.6 250.2h4M403.2 250.2h-4M133.6 278.4h4M403.2 278.4h-4M133.6 306.7h4M403.2 306.7h-4M133.6 334.9h4M403.2 334.9h-4M133.6 363.2h4M403.2 363.2h-4M133.6 356.1h2M403.2 356.1h-2M133.6 349.1h2M403.2 349.1h-2M133.6 342.0h2M403.2 342.0h-2M133.6 327.9h2M403.2 327.9h-2M133.6 320.8h2M403.2 320.8h-2M133.6 313.8h2M403.2 313.8h-2M133.6 299.6h2M403.2 299.6h-2M133.6 292.6h2M403.2 292.6h-2M133.6 285.5h2M403.2 285.5h-2M133.6 271.4h2M403.2 271.4h-2M133.6 264.3h2M403.2 264.3h-2M133.6 257.3h2M403.2 257.3h-2M133.6 243.1h2M403.2 243.1h-2" stroke="#333" stroke-width=".75" fill="none"/>
  <rect x="133.6" y="237.3" width="269.6" height="128.6" fill="none" stroke="#333" stroke-width=".8"/>
  <polyline points="134.0,356.4 151.9,353.1 169.7,351.5 187.9,347.5 205.8,341.2 223.7,328.6 241.6,305.5 259.4,265.4 277.6,238.6 295.5,251.5 313.7,289.6 331.6,328.0 349.5,350.8 367.3,359.1 385.2,364.7 403.1,366.4" fill="none" stroke="#333" stroke-width=".9" stroke-linejoin="round"/>
  <text x="133.6" y="378.2" text-anchor="middle">0</text>
  <text x="223.5" y="378.2" text-anchor="middle">5</text>
  <text x="313.4" y="378.2" text-anchor="middle">10</text>
  <text x="403.2" y="378.2" text-anchor="middle">15</text>
  <text x="128.8" y="252.8" text-anchor="end">200</text>
  <text x="128.8" y="281.1" text-anchor="end">180</text>
  <text x="128.8" y="309.3" text-anchor="end">160</text>
  <text x="128.8" y="337.6" text-anchor="end">140</text>
  <text x="128.8" y="365.8" text-anchor="end">120</text>
  <text x="268.4" y="390.3" text-anchor="middle">Distance (pixels)</text>
  <text transform="translate(109 301.6) rotate(-90)" text-anchor="middle">Gray Value</text>
 </svg>
 <div class="btn" style="left:5.6px;top:194.0px;width:23.5px;height:13.5px;line-height:11.5px"><span>List</span></div>
 <div class="btn" style="left:32.1px;top:194.0px;width:31.0px;height:13.5px;line-height:11.5px"><span>Data »</span></div>
 <div class="btn" style="left:65.2px;top:194.0px;width:31.0px;height:13.5px;line-height:11.5px"><span>More »</span></div>
 <div class="btn" style="left:99.6px;top:194.0px;width:21.0px;height:13.5px;line-height:11.5px"><span>Live</span></div>
 <div class="a" style="left:124.6px;top:197.3px;width:120px;height:5.2px;overflow:hidden"><div class="t" style="left:0;top:-0.8px;font-size:8px;color:#222">x=9. Y(X)=198.74</div></div>
 <div class="a" style="left:186.6px;top:199.2px;width:143.0px;height:3px;background:#dbdbdb"></div>
</div><!--/plot1-->

<!-- ===== plot 2 ===== -->
<div class="win" id="plot2" style="left:424px;top:204px;width:334px;height:209.5px">
 <div class="tb" style="height:12.800px">Plot of Clarity Max Western ECL_CLIA_Flip</div>
 <svg class="x" style="left:323.7px" viewBox="0 0 9 9"><path d="M.8 1.300L8.200 7.700M8.200 1.300L.8 7.700" stroke="#fff" stroke-width="1.800" fill="none"/></svg>
 <div class="t dj" style="left:2px;top:13.600px;font-size:7.7px;color:#1a1a1a">18.34x208.82&nbsp;&nbsp; (527x275); 8-bit; 142K</div>
 <svg class="a" style="left:2.5px;top:22.7px" width="329.5" height="171.3" viewBox="426.5 226.7 329.5 171.3" font-family="DejaVu Sans,sans-serif" font-size="8.400" fill="#2e2e2e">
  <rect x="426.5" y="226.7" width="329.5" height="171.3" fill="#fff"/>
  <path d="M563.6 237.3V367.4M652.8 237.3V367.4M474 260.5H742.1M474 301.4H742.1M474 342.4H742.1" stroke="#cecece" stroke-width=".7" fill="none"/>
  <path d="M474.0 367.4v-4M474.0 237.3v4M563.6 367.4v-4M563.6 237.3v4M652.8 367.4v-4M652.8 237.3v4M742.1 367.4v-4M742.1 237.3v4M491.9 367.4v-2M491.9 237.3v2M509.7 367.4v-2M509.7 237.3v2M527.6 367.4v-2M527.6 237.3v2M545.5 367.4v-2M545.5 237.3v2M581.2 367.4v-2M581.2 237.3v2M599.1 367.4v-2M599.1 237.3v2M617.0 367.4v-2M617.0 237.3v2M634.9 367.4v-2M634.9 237.3v2M670.6 367.4v-2M670.6 237.3v2M688.5 367.4v-2M688.5 237.3v2M706.4 367.4v-2M706.4 237.3v2M724.2 367.4v-2M724.2 237.3v2M474 260.5h4M742.1 260.5h-4M474 301.4h4M742.1 301.4h-4M474 342.4h4M742.1 342.4h-4M474 367.0h2M742.1 367.0h-2M474 358.8h2M742.1 358.8h-2M474 350.6h2M742.1 350.6h-2M474 334.2h2M742.1 334.2h-2M474 326.0h2M742.1 326.0h-2M474 317.8h2M742.1 317.8h-2M474 309.6h2M742.1 309.6h-2M474 293.3h2M742.1 293.3h-2M474 285.1h2M742.1 285.1h-2M474 276.9h2M742.1 276.9h-2M474 268.7h2M742.1 268.7h-2M474 252.3h2M742.1 252.3h-2M474 244.1h2M742.1 244.1h-2" stroke="#333" stroke-width=".75" fill="none"/>
  <rect x="474" y="237.3" width="268.1" height="130.1" fill="none" stroke="#333" stroke-width=".8"/>
  <polyline points="474.0,357.8 491.8,354.1 509.7,352.1 527.9,347.8 545.8,341.6 563.7,329.0 581.2,305.8 599.1,264.1 617.3,238.9 634.8,250.9 652.7,289.6 670.6,328.3 688.5,351.8 706.3,361.1 724.2,366.0 742.1,367.4" fill="none" stroke="#333" stroke-width=".9" stroke-linejoin="round"/>
  <text x="474.0" y="379.6" text-anchor="middle">0</text>
  <text x="563.6" y="379.6" text-anchor="middle">5</text>
  <text x="652.8" y="379.6" text-anchor="middle">10</text>
  <text x="742.1" y="379.6" text-anchor="middle">15</text>
  <text x="469" y="263.1" text-anchor="end">200</text>
  <text x="469" y="304.0" text-anchor="end">150</text>
  <text x="469" y="345.0" text-anchor="end">100</text>
  <text x="608.0" y="392" text-anchor="middle">Distance (pixels)</text>
  <text transform="translate(447.8 302.4) rotate(-90)" text-anchor="middle">Gray Value</text>
 </svg>
 <div class="btn" style="left:6.0px;top:195.0px;width:23.8px;height:13.5px;line-height:11.5px"><span>List</span></div>
 <div class="btn" style="left:33.0px;top:195.0px;width:29.6px;height:13.5px;line-height:11.5px"><span>Data »</span></div>
 <div class="btn" style="left:65.5px;top:195.0px;width:31.5px;height:13.5px;line-height:11.5px"><span>More »</span></div>
 <div class="btn" style="left:100.4px;top:195.0px;width:20.4px;height:13.5px;line-height:11.5px"><span>Live</span></div>
 <div class="a" style="left:125.0px;top:198.3px;width:120px;height:5.2px;overflow:hidden"><div class="t" style="left:0;top:-0.8px;font-size:8px;color:#222">x=15. Y(X)=68.6</div></div>
 <div class="a" style="left:181.0px;top:200.6px;width:147.0px;height:3px;background:#dbdbdb"></div>
</div><!--/plot2-->

<!-- ===== right image ===== -->
<div class="win" id="imgR" style="background:#f0f0f0;left:758.7px;top:204px;width:77.800px;height:219.500px;overflow:hidden">
 <div class="tb" style="height:12.800px;text-align:left;padding-left:12.300px;right:0">Clarity Max...</div>
 <svg class="x" style="left:68.3px" viewBox="0 0 9 9"><path d="M.8 1.300L8.200 7.700M8.200 1.300L.8 7.700" stroke="#fff" stroke-width="1.800" fill="none"/></svg>
 <div class="t dj" style="left:3.800px;top:13.600px;font-size:7.5px;color:#111">70x323 pixels; RGB; 88K</div>
 <svg class="a" style="left:21.7px;top:22.8px" width="34.8" height="193.7" viewBox="780.4 226.8 34.8 193.7" font-family="Liberation Sans,sans-serif" font-size="5.200" font-weight="bold">
  <defs>
   <linearGradient id="rbg" x1="0" y1="0" x2="0" y2="1"><stop offset="0" stop-color="#6e6e6e"/><stop offset=".3" stop-color="#666"/><stop offset=".6" stop-color="#5c5c5c"/><stop offset="1" stop-color="#565656"/></linearGradient>
   <linearGradient id="rst" x1="0" y1="0" x2="0" y2="1"><stop offset="0" stop-color="#fff" stop-opacity=".72"/><stop offset=".1" stop-color="#fff" stop-opacity=".6"/><stop offset=".13" stop-color="#eee" stop-opacity=".4"/><stop offset=".4" stop-color="#ddd" stop-opacity=".3"/><stop offset="1" stop-color="#ccc" stop-opacity=".15"/></linearGradient>
   <filter id="nz2" x="0" y="0" width="100%" height="100%"><feTurbulence type="fractalNoise" baseFrequency=".08 .05" numOctaves="3" seed="9"/><feColorMatrix values="0 0 0 0 .75  0 0 0 0 .75  0 0 0 0 .75  .9 .9 0 0 -.72"/></filter>
   <filter id="bl2" x="-50%" y="-5%" width="200%" height="110%"><feGaussianBlur stdDeviation=".8"/></filter>
  </defs>
  <rect x="780.4" y="226.8" width="34.8" height="193.7" fill="url(#rbg)"/>
  <rect x="780.4" y="226.8" width="34.8" height="193.7" filter="url(#nz2)" opacity=".28"/>
  <rect x="797.500" y="228" width="4.400" height="192" fill="url(#rst)" filter="url(#bl2)"/>
  <rect x="786.300" y="232.600" width="8.200" height="36.800" fill="none" stroke="#7878e8" stroke-width="1.250"/>
  <rect x="794" y="228.6" width="11.0" height="20.3" fill="none" stroke="#d8d020" stroke-width="1.15"/>
  <rect x="794" y="228.6" width="11.0" height="20.3" fill="none" stroke="#222" stroke-width="1" stroke-dasharray="1.800 2.500"/>
  <rect x="796.6" y="235.8" width="4" height="5.800" rx="1" fill="#0a0a0a"/><text x="798.6" y="240.6" text-anchor="middle" fill="#fff">1</text>
  <rect x="794.5" y="249.5" width="10.5" height="19.9" fill="none" stroke="#c4c050" stroke-width="0.9"/>
  <rect x="796.6" y="256.6" width="4" height="5.800" rx="1" fill="#0a0a0a"/><text x="798.6" y="261.4" text-anchor="middle" fill="#fff">2</text>
  <rect x="794.5" y="270.5" width="9.5" height="20.9" fill="none" stroke="#d8d020" stroke-width="1.15"/>
  <rect x="796.6" y="278.1" width="4" height="5.800" rx="1" fill="#0a0a0a"/><text x="798.6" y="282.9" text-anchor="middle" fill="#fff">3</text>
  <rect x="795" y="293.6" width="9.6" height="19.4" fill="none" stroke="#d8d020" stroke-width="1.15"/>
  <rect x="797.2" y="300.6" width="4" height="5.800" rx="1" fill="#0a0a0a"/><text x="799.2" y="305.4" text-anchor="middle" fill="#fff">4</text>
  <rect x="795.9" y="314.5" width="8.8" height="20.6" fill="none" stroke="#d8d020" stroke-width="1.15"/>
  <rect x="797.6" y="323.1" width="4" height="5.800" rx="1" fill="#0a0a0a"/><text x="799.6" y="327.9" text-anchor="middle" fill="#fff">5</text>
  <rect x="795.1" y="336.4" width="8.3" height="20.1" fill="none" stroke="#d8d020" stroke-width="1.15"/>
  <rect x="796.6" y="344.1" width="4" height="5.800" rx="1" fill="#0a0a0a"/><text x="798.6" y="348.9" text-anchor="middle" fill="#fff">6</text>
  <rect x="796.4" y="359" width="7.0" height="20.0" fill="none" stroke="#d8d020" stroke-width="1.15"/>
  <rect x="797.6" y="366.1" width="4" height="5.800" rx="1" fill="#0a0a0a"/><text x="799.6" y="370.9" text-anchor="middle" fill="#fff">7</text>
  <rect x="797.1" y="380.4" width="6.3" height="20.1" fill="none" stroke="#d8d020" stroke-width="1.15"/>
  <rect x="797.0" y="388.1" width="4" height="5.800" rx="1" fill="#0a0a0a"/><text x="799.0" y="392.9" text-anchor="middle" fill="#fff">8</text>
  <rect x="797.1" y="402.5" width="6.3" height="18.5" fill="none" stroke="#d8d020" stroke-width="1.15"/>
  <rect x="798.0" y="409.1" width="4" height="5.800" rx="1" fill="#0a0a0a"/><text x="800.0" y="413.9" text-anchor="middle" fill="#fff">9</text>
 </svg>
</div><!--/imgR-->

<!-- artefacts of a window behind -->
<svg class="a" style="left:419px;top:238px" width="6" height="40" viewBox="0 0 6 40"><path d="M.6 7.200L2.800 1.200L5 7.200M.3 10h5.200" stroke="#111" stroke-width="1.300" fill="none"/><path d="M1.500 35.200h2.700M4.200 34v3.600" stroke="#333" stroke-width="1" fill="none"/></svg>
<!-- watermark -->
<div class="t" id="wm" style="left:537.8px;top:430.8px;font-size:18.4px;color:#d2d2d2;-webkit-text-stroke:.3px #d2d2d2;font-family:'Liberation Sans','Noto Sans CJK SC',sans-serif">阿拉斯加科技(www.alifescience.com)</div>
</div>
</body></html>
